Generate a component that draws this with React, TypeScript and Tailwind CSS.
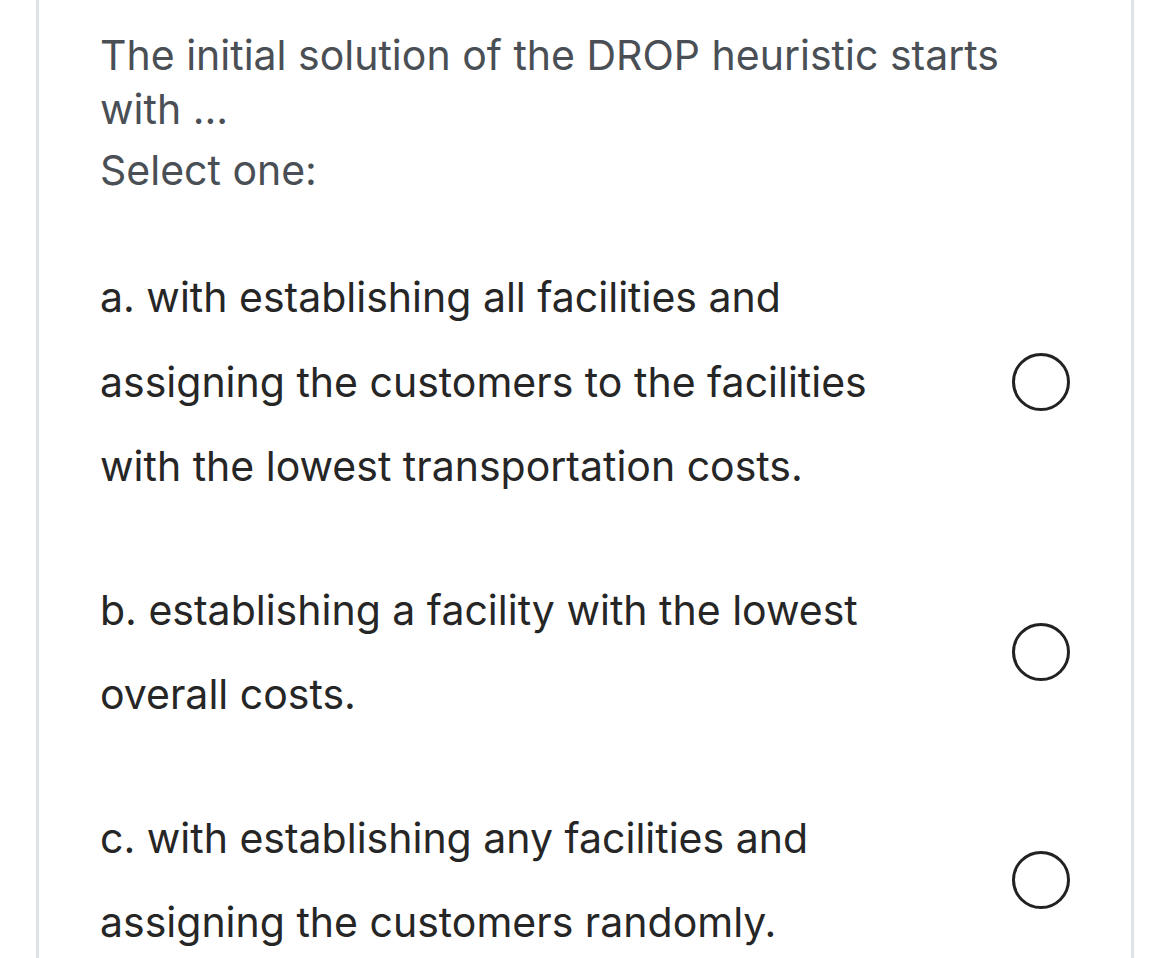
import React from "react";

const font = { fontFamily: "Inter, 'Noto Sans', 'Liberation Sans', sans-serif" };

function Option({ lines }: { lines: string[] }) {
  return (
    <div className="flex items-center justify-between">
      <div className="text-[41px] leading-[84.5px] text-[#262626]">
        {lines.map((l, i) => (
          <div key={i}>{l}</div>
        ))}
      </div>
      <div className="mr-[61px] h-[58px] w-[58px] rounded-full border-[3px] border-[#222222]" />
    </div>
  );
}

export default function App() {
  return (
    <div className="min-h-[958px] bg-white" style={font}>
      <div className="ml-[36px] h-[958px] w-[1098px] border-x-[3px] border-[#dfe2e6] pl-[61px] pt-[28px]">
        <div className="text-[41px] leading-[54px] text-[#4a4f55]">
          <div>The initial solution of the DROP heuristic starts</div>
          <div>with ...</div>
          <div className="mt-[7px]">Select one:</div>
        </div>
        <div className="mt-[58px] flex flex-col gap-[59px]">
          <Option
            lines={[
              "a. with establishing all facilities and",
              "assigning the customers to the facilities",
              "with the lowest transportation costs.",
            ]}
          />
          <Option lines={["b. establishing a facility with the lowest", "overall costs."]} />
          <Option lines={["c. with establishing any facilities and", "assigning the customers randomly."]} />
        </div>
      </div>
    </div>
  );
}
